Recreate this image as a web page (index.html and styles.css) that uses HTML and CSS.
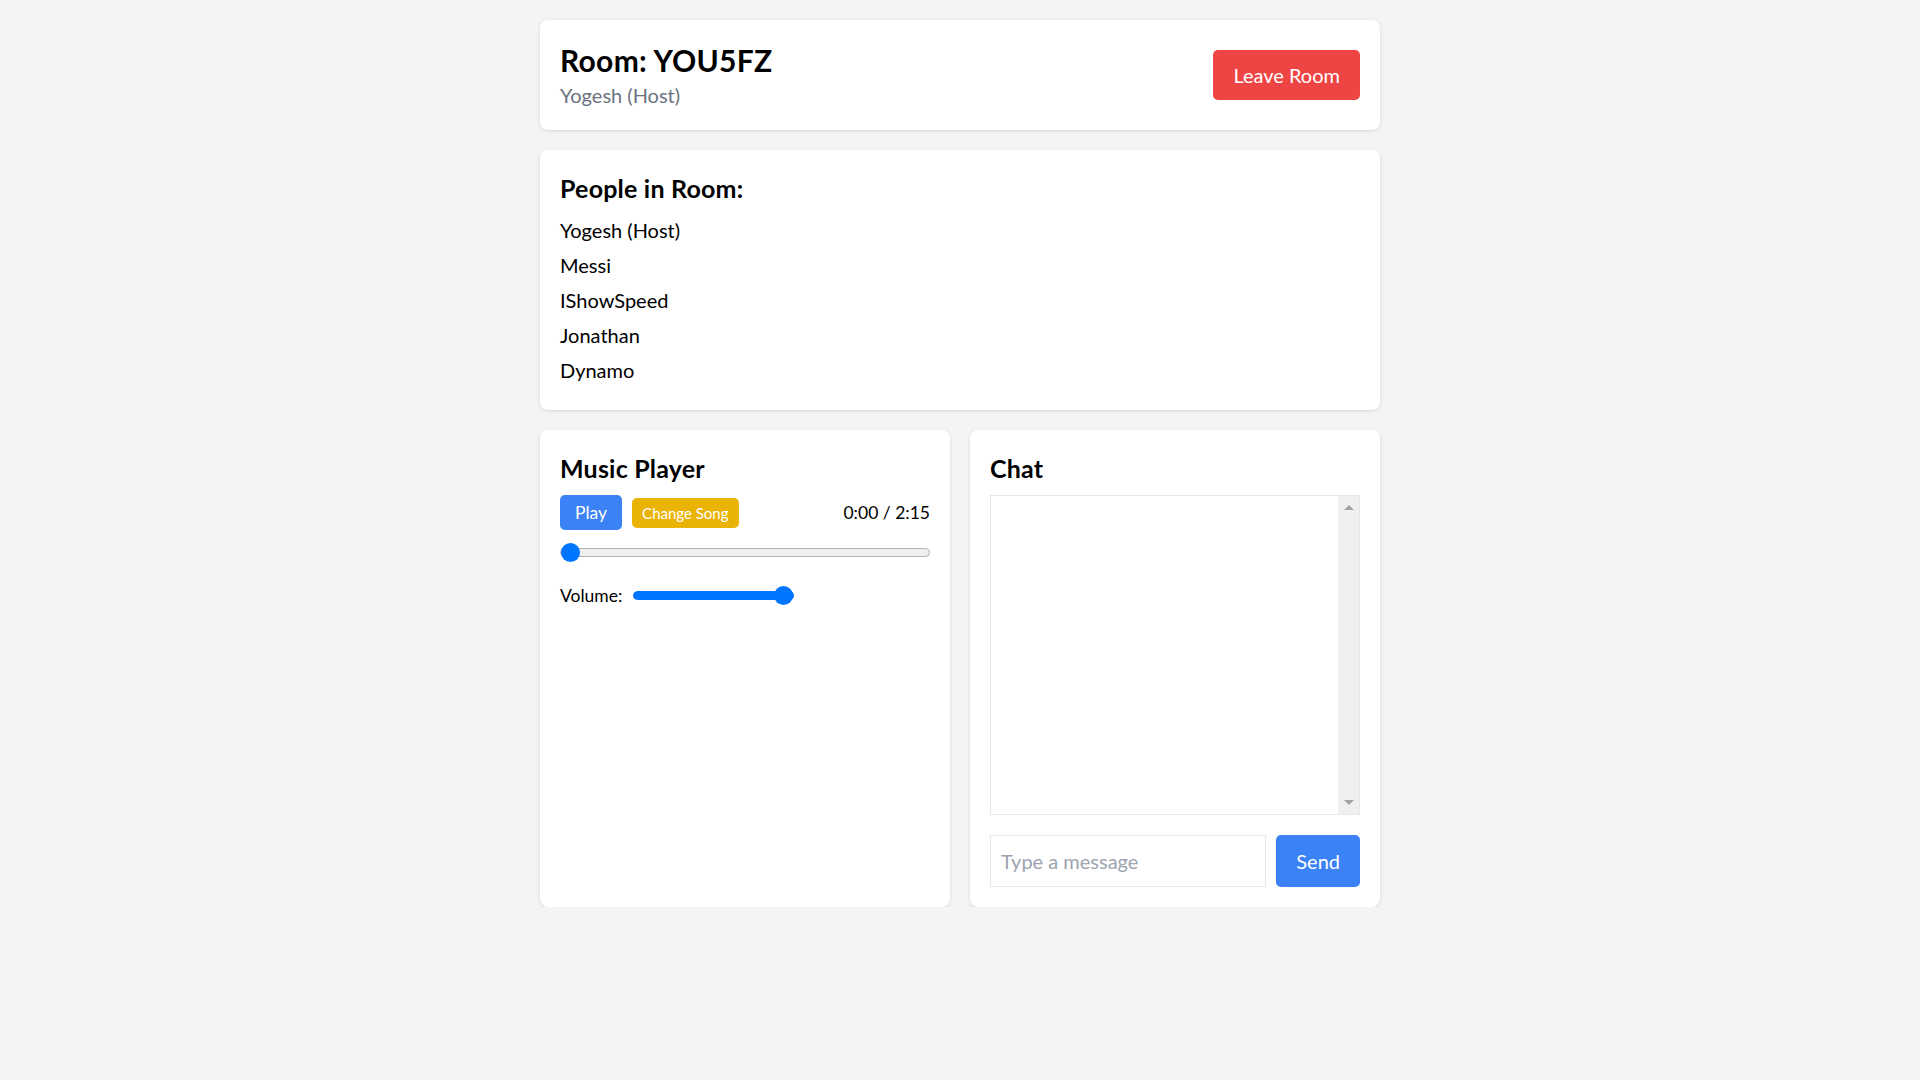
FILE: index.html
```html
<!DOCTYPE html>
<html lang="en">
<head>
<meta charset="utf-8">
<title>Room YOU5FZ</title>
<link rel="stylesheet" href="styles.css">
</head>
<body>
<div class="page">
  <header class="card header">
    <div class="header-info">
      <h1 class="room-title">Room: YOU5FZ</h1>
      <p class="room-user">Yogesh (Host)</p>
    </div>
    <button class="btn btn-leave">Leave Room</button>
  </header>

  <section class="card people">
    <h2 class="card-title">People in Room:</h2>
    <ul class="people-list">
      <li>Yogesh (Host)</li>
      <li>Messi</li>
      <li>IShowSpeed</li>
      <li>Jonathan</li>
      <li>Dynamo</li>
    </ul>
  </section>

  <div class="panels">
    <section class="card player">
      <h2 class="card-title">Music Player</h2>
      <div class="controls">
        <div class="control-buttons">
          <button class="btn btn-play">Play</button>
          <button class="btn btn-change">Change Song</button>
        </div>
        <span class="time">0:00 / 2:15</span>
      </div>
      <input class="range seek" type="range" min="0" max="135" value="0">
      <div class="volume">
        <label class="volume-label">Volume:</label>
        <input class="range vol" type="range" min="0" max="1" step="0.01" value="1">
      </div>
    </section>

    <section class="card chat">
      <h2 class="card-title">Chat</h2>
      <div class="messages">
        <div class="message-list"></div>
        <div class="scrollbar" aria-hidden="true">
          <span class="arrow arrow-up"></span>
          <span class="arrow arrow-down"></span>
        </div>
      </div>
      <form class="chat-form">
        <input class="chat-input" type="text" placeholder="Type a message">
        <button class="btn btn-send" type="button">Send</button>
      </form>
    </section>
  </div>
</div>
</body>
</html>
```

FILE: styles.css
```css
* { box-sizing: border-box; }

html, body {
  margin: 0;
  padding: 0;
}

body {
  background: #f3f4f6;
  font-family: Lato, "Open Sans", "Liberation Sans", sans-serif;
  color: #000;
}

.page {
  width: 840px;
  margin: 0 auto;
  padding-top: 20px;
}

.card {
  background: #fff;
  border-radius: 8px;
  box-shadow: 0 1px 4px rgba(0, 0, 0, 0.1), 0 1px 2px -1px rgba(0, 0, 0, 0.1);
  padding: 20px;
  margin-bottom: 20px;
}

.header {
  display: flex;
  align-items: center;
  justify-content: space-between;
}

.room-title {
  margin: 0;
  font-size: 30px;
  line-height: 40px;
  font-weight: 700;
  letter-spacing: 0.3px;
}

.room-user {
  margin: 0;
  font-size: 20px;
  line-height: 30px;
  color: #6b7280;
}

.btn {
  border: none;
  border-radius: 5px;
  color: #fff;
  font-family: inherit;
  cursor: pointer;
  margin: 0;
}

.btn-leave {
  background: #ef4444;
  font-size: 20px;
  line-height: 30px;
  padding: 10px 20px;
}

.card-title {
  margin: 0 0 9px;
  padding-top: 1px;
  font-size: 25px;
  line-height: 35px;
  font-weight: 700;
  letter-spacing: 0.2px;
}

.people-list {
  list-style: none;
  margin: 0;
  padding: 0;
}

.people-list li {
  font-size: 20px;
  line-height: 30px;
  margin-bottom: 5px;
}

.panels {
  display: grid;
  grid-template-columns: 1fr 1fr;
  gap: 20px;
}

.panels .card {
  margin-bottom: 0;
}

.controls {
  display: flex;
  align-items: center;
  justify-content: space-between;
}

.control-buttons {
  display: flex;
  align-items: center;
  gap: 10px;
}

.btn-play {
  background: #3b82f6;
  font-size: 17.5px;
  line-height: 25px;
  padding: 5px 15px;
}

.btn-change {
  background: #eab308;
  font-size: 15px;
  line-height: 20px;
  padding: 5px 10px;
}

.time {
  font-size: 17.5px;
  line-height: 25px;
}

.range {
  -webkit-appearance: none;
  appearance: none;
  display: block;
  height: 19px;
  margin: 0;
  padding: 0;
  background: transparent;
}

.range::-webkit-slider-runnable-track {
  height: 9px;
  border-radius: 5px;
  background: #efefef;
  border: 1px solid #b2b2b2;
}

.range::-webkit-slider-thumb {
  -webkit-appearance: none;
  appearance: none;
  width: 19px;
  height: 19px;
  border-radius: 50%;
  background: #0075ff;
  border: none;
  margin-top: -6px;
}

.seek {
  width: 100%;
  margin-top: 13px;
}

.volume {
  display: flex;
  align-items: center;
  gap: 11px;
  margin-top: 21px;
}

.volume-label {
  font-size: 17.5px;
  line-height: 25px;
}

.vol {
  width: 161px;
}

.vol::-webkit-slider-runnable-track {
  background: #0075ff;
  border-color: #0075ff;
}

.messages {
  display: flex;
  height: 320px;
  border: 1px solid #e5e7eb;
  margin-bottom: 20px;
}

.message-list {
  flex: 1;
  overflow-y: auto;
}

.scrollbar {
  width: 21px;
  background: #f0f0f0;
  display: flex;
  flex-direction: column;
  justify-content: space-between;
  align-items: center;
  padding: 9px 0;
}

.arrow {
  width: 0;
  height: 0;
  border-left: 5px solid transparent;
  border-right: 5px solid transparent;
}

.arrow-up {
  border-bottom: 5px solid #a3a3a3;
}

.arrow-down {
  border-top: 5px solid #a3a3a3;
}

.chat-form {
  display: flex;
  gap: 10px;
  margin: 0;
}

.chat-input {
  flex: 1;
  min-width: 0;
  border: 1px solid #e5e7eb;
  border-radius: 0;
  padding: 10px;
  font-family: inherit;
  font-size: 20px;
  line-height: 30px;
  color: #000;
  outline: none;
  margin: 0;
}

.chat-input::placeholder {
  color: #9ca3af;
}

.btn-send {
  background: #3b82f6;
  font-size: 20px;
  line-height: 30px;
  padding: 10px 20px;
}
```
